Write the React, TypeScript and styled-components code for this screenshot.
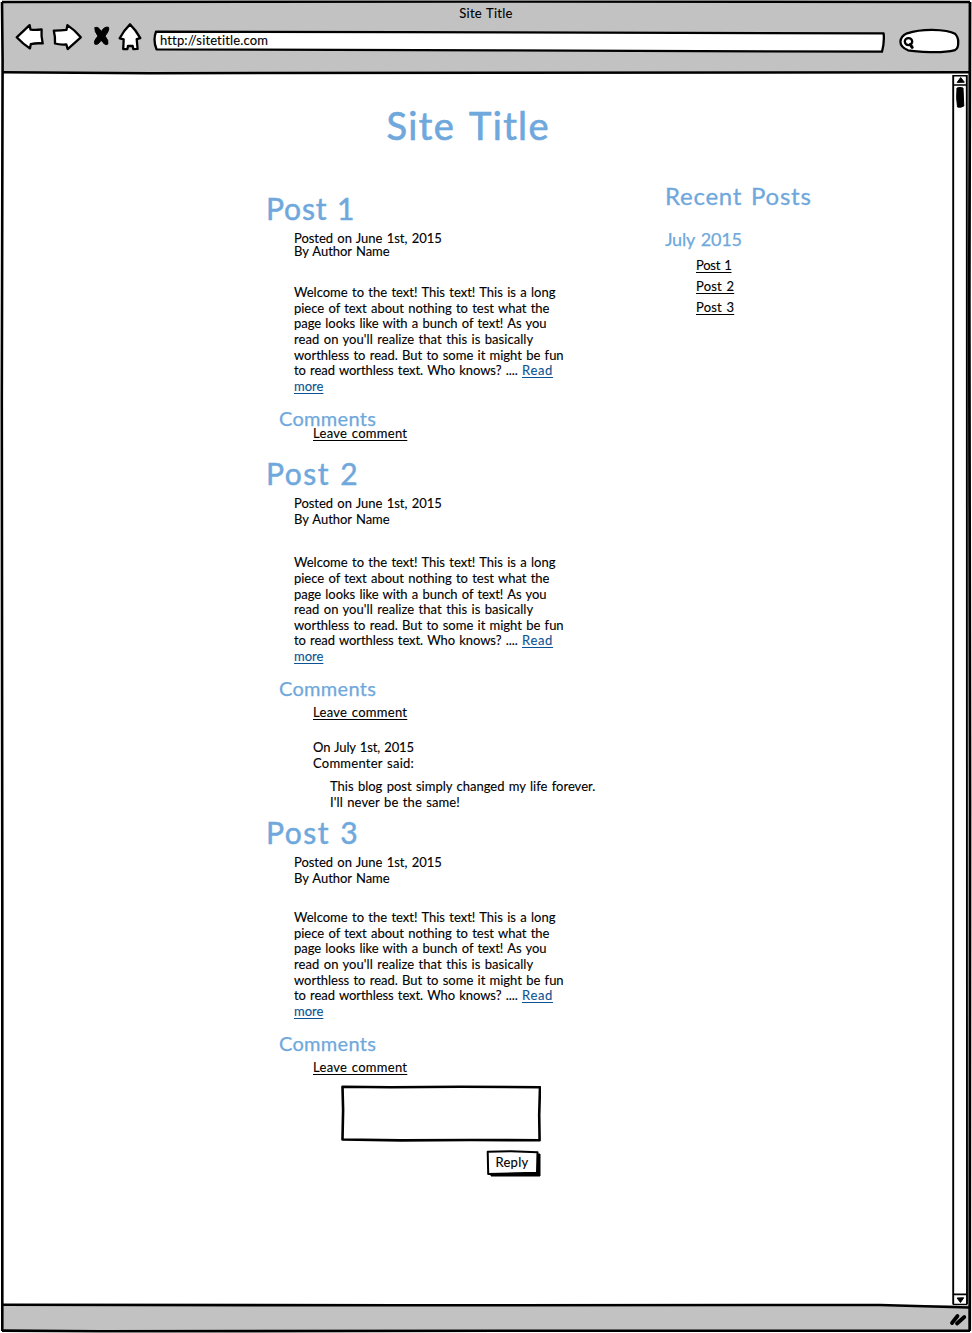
import React from 'react';
import styled, { createGlobalStyle } from 'styled-components';

const Global = createGlobalStyle`
  * { box-sizing: border-box; }
  body { margin: 0; background: #fff; }
`;

const Window = styled.div`
  position: relative;
  width: 972px;
  height: 1333px;
  padding: 1px 3px 2px 2px;
  display: flex;
  flex-direction: column;
  overflow: hidden;
  color: #000;
  font-family: Lato, 'Open Sans', sans-serif;
  font-size: 13px;
  word-spacing: 1px;
  -webkit-text-stroke: 0.12px;
`;

const FrameLines = styled.svg`
  position: absolute;
  inset: 0;
  pointer-events: none;
`;

const TopBar = styled.header`
  height: 72px;
  background: #c2c2c2;
  flex: none;
`;

const WindowTitle = styled.div`
  height: 22px;
  padding: 4px 0 0 1px;
  line-height: 16px;
  text-align: center;
  letter-spacing: 0.25px;
`;

const Toolbar = styled.div`
  display: flex;
  height: 32px;
  padding-left: 12px;
`;

const Icon = styled.svg<{ $gap?: number }>`
  display: block;
  flex: none;
  margin-left: ${(p) => p.$gap ?? 0}px;
  fill: #fff;
  stroke: #000;
  stroke-width: 2.3;
  stroke-linejoin: round;
  stroke-linecap: round;
`;

const AddressBar = styled.div`
  position: relative;
  flex: none;
  width: 734px;
  height: 32px;
  margin-left: 9px;
`;

const AddressText = styled.span`
  position: relative;
  display: block;
  padding: 9px 0 0 8px;
  line-height: 16px;
  letter-spacing: 0.14px;
`;

const Outline = styled.svg`
  position: absolute;
  inset: 0;
  fill: #fff;
  stroke: #000;
  stroke-linejoin: round;
`;

const Viewport = styled.div`
  display: flex;
  flex: 1;
`;

const Page = styled.main`
  flex: 1;
  padding-left: 263px;
`;

const SiteTitle = styled.h1`
  margin: 28px 0 0;
  padding-left: 121.5px;
  font-size: 38px;
  line-height: 48px;
  font-weight: 400;
  letter-spacing: 1.35px;
  word-spacing: 4px;
  color: #6fa8dc;
  -webkit-text-stroke: 0.7px;
`;

const Columns = styled.div`
  display: flex;
`;

const Posts = styled.div`
  width: 400px;
  padding-top: 41px;
`;

const Post = styled.article<{ $before?: number }>`
  padding-top: ${(p) => p.$before ?? 0}px;
`;

const PostTitle = styled.h2<{ $track: number }>`
  margin: 0 0 0 1px;
  font-size: 30px;
  line-height: 36px;
  font-weight: 400;
  letter-spacing: ${(p) => p.$track}px;
  word-spacing: 1px;
  color: #6fa8dc;
  -webkit-text-stroke: 0.5px;
`;

const Meta = styled.div<{ $before: number; $lead: number }>`
  padding: ${(p) => p.$before}px 0 0 29px;
  line-height: ${(p) => p.$lead}px;
`;

const Line = styled.div<{ $track?: number }>`
  white-space: nowrap;
  letter-spacing: ${(p) => p.$track ?? 0}px;
`;

const Body = styled.div<{ $before: number }>`
  padding: ${(p) => p.$before}px 0 0 29px;
  line-height: 15.6px;
`;

const Link = styled.a<{ $track?: number; $accent?: boolean }>`
  color: ${(p) => (p.$accent ? '#0b5394' : '#000')};
  letter-spacing: ${(p) => p.$track ?? 0}px;
  text-decoration: underline;
  text-decoration-thickness: 1px;
  text-underline-offset: 2px;
  text-decoration-skip-ink: none;
  white-space: nowrap;
`;

const CommentsTitle = styled.h3<{ $before: number }>`
  margin: ${(p) => p.$before}px 0 0 14px;
  font-size: 20px;
  line-height: 24px;
  font-weight: 400;
  letter-spacing: 0.3px;
  color: #6fa8dc;
  -webkit-text-stroke: 0.25px;
`;

const LeaveComment = styled.div<{ $shift: number }>`
  margin: ${(p) => p.$shift}px 0 0 48px;
  line-height: 16px;
`;

const Comment = styled.div`
  margin: 19px 0 0 48px;
  line-height: 16px;
`;

const Quote = styled.div`
  margin: 7px 0 0 17px;
`;

const ReplyForm = styled.form`
  width: 200px;
  margin: 9.5px 0 0 76px;
  display: flex;
  flex-direction: column;
  align-items: flex-end;
  gap: 8.5px;
`;

const ReplyField = styled.div`
  position: relative;
  width: 200px;
  height: 57px;
`;

const ReplyButton = styled.button`
  position: relative;
  width: 55px;
  height: 27px;
  padding: 0 3px 3px 0;
  border: 0;
  background: none;
  font: inherit;
  color: #000;
  line-height: 16px;
  letter-spacing: 0.3px;
`;

const ReplyLabel = styled.span`
  position: relative;
`;

const Sidebar = styled.aside`
  padding-top: 32px;
`;

const SidebarTitle = styled.h2`
  margin: 0;
  font-size: 24px;
  line-height: 30px;
  font-weight: 400;
  letter-spacing: 0.75px;
  word-spacing: 2px;
  color: #6fa8dc;
  -webkit-text-stroke: 0.3px;
`;

const Month = styled.h3`
  margin: 16px 0 0;
  font-size: 18px;
  line-height: 24px;
  font-weight: 400;
  letter-spacing: -0.25px;
  word-spacing: 2px;
  color: #6fa8dc;
  -webkit-text-stroke: 0.25px;
`;

const Archive = styled.ul`
  margin: 4px 0 0;
  padding: 0 0 0 31px;
  list-style: none;
  line-height: 21px;
`;

const ScrollTrack = styled.svg`
  display: block;
  flex: none;
`;

const StatusBar = styled.footer`
  display: flex;
  justify-content: flex-end;
  align-items: center;
  height: 26px;
  flex: none;
  background: #c2c2c2;
`;

const Excerpt = ({ before }: { before: number }) => (
  <Body $before={before}>
    <Line>Welcome to the text! This text! This is a long</Line>
    <Line $track={-0.02}>piece of text about nothing to test what the</Line>
    <Line $track={-0.05}>page looks like with a bunch of text! As you</Line>
    <Line $track={0.06}>read on you'll realize that this is basically</Line>
    <Line $track={-0.02}>worthless to read. But to some it might be fun</Line>
    <Line $track={-0.07}>
      to read worthless text. Who knows? .... <Link $accent $track={0.7}>Read</Link>
    </Line>
    <Line><Link $accent>more</Link></Line>
  </Body>
);

const PostMeta = ({ before, lead }: { before: number; lead: number }) => (
  <Meta $before={before} $lead={lead}>
    <Line $track={-0.03}>Posted on June 1st, 2015</Line>
    <Line $track={-0.05}>By Author Name</Line>
  </Meta>
);

const CommentsHead = ({ before, shift }: { before: number; shift: number }) => (
  <>
    <CommentsTitle $before={before}>Comments</CommentsTitle>
    <LeaveComment $shift={shift}><Link $track={0.28}>Leave comment</Link></LeaveComment>
  </>
);

const TopChrome = () => (
  <TopBar>
    <WindowTitle>Site Title</WindowTitle>
    <Toolbar>
      <Icon width="32" height="32" viewBox="14 22.9 32 32">
        <path d="M16.7 37.2 L29.6 25 L30.5 29.5 Q36 30.2 41.6 29.3 Q41 36 42.7 43.3 Q36 42.8 30.8 44 L30 48.3 Q23 44 16.7 37.2Z" />
      </Icon>
      <Icon $gap={5} width="32" height="32" viewBox="51 22.9 32 32">
        <path d="M53.8 30.5 Q60 30.6 66.5 29.7 L67.4 25 Q75 30 80.8 37.2 L67.7 49 L66.3 44.3 Q60 44.8 55 43.4 Q55.4 37 53.8 30.5Z" />
      </Icon>
      <Icon $gap={9} width="20" height="32" viewBox="92 22.9 20 32">
        <path d="M95 27.7 Q98 25.5 101.2 31.5 Q104.5 26 108.5 27.2 Q109.8 30 105 36 Q109 40.5 107.8 44 Q105 46 101.2 40 Q98 45.5 94.8 44 Q93.3 41 98 36 Q94 31 95 27.7Z" fill="#000" strokeWidth="1" />
      </Icon>
      <Icon $gap={5} width="26" height="32" viewBox="117 22.9 26 32">
        <path d="M130 24.2 Q136 30 140.3 38 L136.7 39 L137.6 48.7 L133.3 49 L132.6 45.7 L128 45.9 L127.4 49 L123.2 49 L123.7 39.2 L119.7 38.2 Q124 30 130 24.2Z" />
      </Icon>
      <AddressBar>
        <Outline width="734" height="32" viewBox="152 22.9 734 32" strokeWidth="2.3">
          <path d="M156 31.6 L400 32 L883.6 33.3 Q884.6 42 882 51.6 L500 50.3 L156.5 49.2 Q152.8 40 156 31.6Z" />
        </Outline>
        <AddressText>http://sitetitle.com</AddressText>
      </AddressBar>
      <Icon $gap={11} width="64" height="32" viewBox="897 22.9 64 32">
        <path d="M907 33.2 Q918 29.6 932 29.7 Q949 30 955 33.7 Q958.3 37 958.2 42 Q958.5 48 955 50 Q945 52.5 930 52 Q915 51.5 908 50.2 Q900.5 47 900.4 41.7 Q900.7 36 907 33.2Z" />
        <ellipse cx="908.5" cy="41.5" rx="3.7" ry="3.5" />
        <path d="M910.3 44.5 L912.2 47.2" strokeWidth="3" />
      </Icon>
    </Toolbar>
  </TopBar>
);

const ScrollBar = () => (
  <ScrollTrack width="17" height="1232" viewBox="952 73 17 1232" fill="none" stroke="#000">
    <path d="M953.2 75 L953.2 1304.5 M966.8 75 L967 1304.5" strokeWidth="1.9" />
    <path d="M953 75.7 H967 M953 85 H967 M953 1294.4 H967 M953 1304.5 H967" strokeWidth="1.6" />
    <path d="M960.7 77.5 L964.3 82.2 L957.2 82.4Z M957.1 1298 L963.7 1297.8 L960.5 1302.5Z" fill="#000" />
    <path d="M957 88 Q960 86.8 963 88 L963.8 106 Q961 108 957.5 107 Q956 98 957 88Z" fill="#000" />
  </ScrollTrack>
);

export default function App() {
  return (
    <Window>
      <Global />
      <TopChrome />
      <Viewport>
        <Page>
          <SiteTitle>Site Title</SiteTitle>
          <Columns>
            <Posts>
              <Post>
                <PostTitle $track={0.85}>Post 1</PostTitle>
                <PostMeta before={5.5} lead={13} />
                <Excerpt before={27.7} />
                <CommentsHead before={12} shift={-5} />
              </Post>
              <Post $before={14}>
                <PostTitle $track={1.5}>Post 2</PostTitle>
                <PostMeta before={4} lead={16} />
                <Excerpt before={28} />
                <CommentsHead before={11} shift={4} />
                <Comment>
                  <Line $track={-0.13}>On July 1st, 2015</Line>
                  <Line $track={0.25}>Commenter said:</Line>
                  <Quote>
                    <Line>This blog post simply changed my life forever.</Line>
                    <Line $track={0.1}>I'll never be the same!</Line>
                  </Quote>
                </Comment>
              </Post>
              <Post $before={4}>
                <PostTitle $track={1.5}>Post 3</PostTitle>
                <PostMeta before={4} lead={16} />
                <Excerpt before={24.7} />
                <CommentsHead before={12} shift={4} />
                <ReplyForm>
                  <ReplyField>
                    <Outline width="200" height="57" viewBox="0 0 200 57" strokeWidth="2.6">
                      <path d="M1.5 1.7 L50 2.3 L120 1.7 L199 2.3 L198.2 30 L198.6 55.3 L130 55 L60 55.4 L1.5 54.5 L2.1 25Z" />
                    </Outline>
                  </ReplyField>
                  <ReplyButton type="button">
                    <Outline width="55" height="27" viewBox="0 0 55 27" strokeWidth="2">
                      <path d="M5 4 L54 4 L54 26 L5 26Z" fill="#000" strokeWidth="1" />
                      <path d="M1.7 1.8 L25 1.3 L51.5 2.2 L51 22.7 L30 23.3 L2.2 24Z" />
                    </Outline>
                    <ReplyLabel>Reply</ReplyLabel>
                  </ReplyButton>
                </ReplyForm>
              </Post>
            </Posts>
            <Sidebar>
              <SidebarTitle>Recent Posts</SidebarTitle>
              <Month>July 2015</Month>
              <Archive>
                <li><Link $track={-0.25}>Post 1</Link></li>
                <li><Link $track={0.2}>Post 2</Link></li>
                <li><Link $track={0.2}>Post 3</Link></li>
              </Archive>
            </Sidebar>
          </Columns>
        </Page>
        <ScrollBar />
      </Viewport>
      <StatusBar>
        <Icon width="20" height="20" viewBox="949 1308 20 20">
          <path d="M952 1323 L957.5 1316 M957 1323.5 L964.3 1317" strokeWidth="3.8" />
        </Icon>
      </StatusBar>
      <FrameLines width="972" height="1333" viewBox="0 0 972 1333" fill="none" stroke="#000">
        <path d="M2 2 L500 1.6 L970 2" strokeWidth="2.4" />
        <path d="M2 2 L2.6 60 L1.8 400 L2.3 900 L2.3 1331" strokeWidth="2.6" />
        <path d="M970 2 L969.3 300 L970 800 L969.7 1331" strokeWidth="2.8" />
        <path d="M3 72.3 L150 73.2 L500 72.7 L969 72.3" strokeWidth="2.6" />
        <path d="M3 1304.8 L400 1305.3 L880 1305 L969 1307.5" strokeWidth="2.6" />
        <path d="M2 1330.6 L100 1331.3 L500 1330.8 L970 1330.7" strokeWidth="2.6" />
      </FrameLines>
    </Window>
  );
}
